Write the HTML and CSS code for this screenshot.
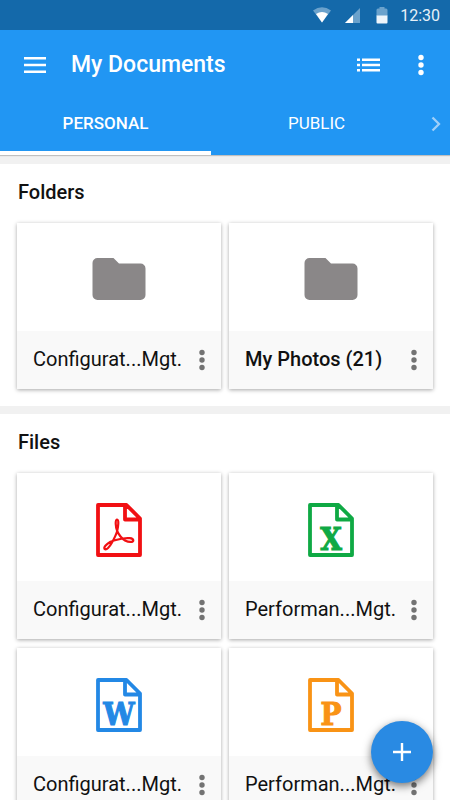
FILE: index.html
```html
<!DOCTYPE html>
<html lang="en">
<head>
    <meta charset="UTF-8">
    <meta name="viewport" content="width=device-width, initial-scale=1.0">
    <title>My Documents</title>
    <link rel="stylesheet" href="styles.css">
</head>
<body>
    <svg width="0" height="0" class="icon-defs" aria-hidden="true">
        <symbol id="more" viewBox="0 0 6 22">
            <circle cx="3" cy="3.5" r="2.7"/>
            <circle cx="3" cy="11" r="2.7"/>
            <circle cx="3" cy="18.5" r="2.7"/>
        </symbol>
        <symbol id="folder" viewBox="0 0 54 44">
            <path d="M5.500 1H21.500l5.500 5.500H48.500a5 5 0 0 1 5 5V38a5 5 0 0 1-5 5H5.500a5 5 0 0 1-5-5V6a5 5 0 0 1 5-5z"/>
        </symbol>
        <symbol id="page" viewBox="0 0 48 56">
            <path d="M3 4H31.500L45 17.500V54H3zM30 4V18.500H45" fill="none" stroke="currentColor" stroke-width="3.800" stroke-linejoin="round"/>
        </symbol>
    </svg>

    <div class="status-bar">
        <svg class="status-wifi" width="18" height="16" viewBox="0 0 18 16" aria-hidden="true">
            <path d="M0 3.500Q9-3 18 3.500L9 15.500z" fill="#6ba2cc"/>
            <path d="M3 7Q9 3 15 7L9 15.500z" fill="#fff"/>
        </svg>
        <svg class="status-signal" width="15" height="15" viewBox="0 0 15 15" aria-hidden="true">
            <path d="M15 0V15H0z" fill="#6ba2cc"/>
            <path d="M8 7V15H0z" fill="#fff"/>
        </svg>
        <svg class="status-battery" width="12" height="17" viewBox="0 0 12 17" aria-hidden="true">
            <path d="M3.500 0h5v1.500H10a1.500 1.500 0 0 1 1.500 1.500V9H.5V3A1.500 1.500 0 0 1 2 1.500h1.500z" fill="#6ba2cc"/>
            <path d="M.5 8.500h11v7a1 1 0 0 1-1 1h-9a1 1 0 0 1-1-1z" fill="#eef5fb"/>
        </svg>
        <span>12:30</span>
    </div>

    <header class="header">
        <div class="toolbar">
            <button class="icon-button" aria-label="Menu">
                <svg width="22" height="16" viewBox="0 0 22 16" fill="#fff">
                    <path d="M0 0h22v2.500H0zM0 6.750h22v2.500H0zM0 13.500h22v2.500H0z"/>
                </svg>
            </button>
            <h1>My Documents</h1>
            <button class="icon-button" aria-label="List view">
                <svg width="23" height="14" viewBox="0 0 23 14" fill="#fff">
                    <path d="M0 .5h3v2.500H0zM5 .5h18v2.500H5zM0 5.750h3v2.500H0zM5 5.750h18v2.500H5zM0 11h3v2.500H0zM5 11h18v2.500H5z"/>
                </svg>
            </button>
            <button class="icon-button toolbar-more" aria-label="More options">
                <svg width="6" height="22"><use href="#more"/></svg>
            </button>
        </div>
        <nav class="tabs">
            <a href="#personal" class="tab active">PERSONAL</a>
            <a href="#public" class="tab">PUBLIC</a>
            <button class="tabs-next" aria-label="Next tab">
                <svg width="10" height="16" viewBox="0 0 10 16" fill="none" stroke="#9fcff9" stroke-width="2.300">
                    <path d="M1.500 1.500L8 8L1.500 14.500"/>
                </svg>
            </button>
        </nav>
    </header>

    <main class="content">
        <section class="group" id="personal">
            <h2>Folders</h2>
            <div class="cards">
                <article class="card">
                    <div class="card-preview"><svg class="folder" width="54" height="44"><use href="#folder"/></svg></div>
                    <div class="card-footer">
                        <span class="card-name">Configurat...Mgt.</span>
                        <button class="card-more" aria-label="Folder options"><svg width="6" height="22"><use href="#more"/></svg></button>
                    </div>
                </article>
                <article class="card">
                    <div class="card-preview"><svg class="folder" width="54" height="44"><use href="#folder"/></svg></div>
                    <div class="card-footer">
                        <span class="card-name unread">My Photos (21)</span>
                        <button class="card-more" aria-label="Folder options"><svg width="6" height="22"><use href="#more"/></svg></button>
                    </div>
                </article>
            </div>
        </section>

        <section class="group">
            <h2>Files</h2>
            <div class="cards">
                <article class="card">
                    <div class="card-preview">
                        <svg class="file pdf" width="48" height="56" viewBox="0 0 48 56">
                            <use href="#page" width="48" height="56"/>
                            <path d="M22.200 30C20.500 25.500 20 19 22 18.500C24.200 18.800 23.200 25 22.200 30C24 34.500 27 37.500 30.500 39.800C34 41.500 38.500 41.300 38.300 39.300C38 36.800 32.500 36.800 28 37.500C23.500 38.200 19 39.200 15.500 40.800C11.500 43 8.500 46 9.500 47.800C11.500 49.500 14.500 46 17 41.500C19.500 37 21.200 33.500 22.200 30z" fill="none" stroke="currentColor" stroke-width="2.200" stroke-linejoin="round"/>
                        </svg>
                    </div>
                    <div class="card-footer">
                        <span class="card-name">Configurat...Mgt.</span>
                        <button class="card-more" aria-label="File options"><svg width="6" height="22"><use href="#more"/></svg></button>
                    </div>
                </article>
                <article class="card">
                    <div class="card-preview">
                        <svg class="file excel" width="48" height="56" viewBox="0 0 48 56">
                            <use href="#page" width="48" height="56"/>
                            <text x="24" y="49">X</text>
                        </svg>
                    </div>
                    <div class="card-footer">
                        <span class="card-name">Performan...Mgt.</span>
                        <button class="card-more" aria-label="File options"><svg width="6" height="22"><use href="#more"/></svg></button>
                    </div>
                </article>
                <article class="card">
                    <div class="card-preview">
                        <svg class="file word" width="48" height="56" viewBox="0 0 48 56">
                            <use href="#page" width="48" height="56"/>
                            <text x="24" y="49">W</text>
                        </svg>
                    </div>
                    <div class="card-footer">
                        <span class="card-name">Configurat...Mgt.</span>
                        <button class="card-more" aria-label="File options"><svg width="6" height="22"><use href="#more"/></svg></button>
                    </div>
                </article>
                <article class="card">
                    <div class="card-preview">
                        <svg class="file powerpoint" width="48" height="56" viewBox="0 0 48 56">
                            <use href="#page" width="48" height="56"/>
                            <text x="24" y="49">P</text>
                        </svg>
                    </div>
                    <div class="card-footer">
                        <span class="card-name">Performan...Mgt.</span>
                        <button class="card-more" aria-label="File options"><svg width="6" height="22"><use href="#more"/></svg></button>
                    </div>
                </article>
            </div>
        </section>
    </main>

    <button class="fab" aria-label="Add document">
        <svg width="18" height="18" viewBox="0 0 18 18" fill="#fff">
            <path d="M7.800 0h2.400v7.800H18v2.400h-7.800V18H7.800v-7.800H0V7.800h7.800z"/>
        </svg>
    </button>
</body>
</html>
```
FILE: styles.css
```css
* {
    box-sizing: border-box;
}

body {
    display: flex;
    flex-direction: column;
    height: 100vh;
    margin: 0;
    font-family: Roboto, sans-serif;
    color: #111;
    background-color: #f1f1f1;
}

h1,
h2 {
    margin: 0;
    font-weight: 500;
}

button {
    display: flex;
    align-items: center;
    justify-content: center;
    padding: 0;
    border: none;
    background: none;
    cursor: pointer;
}

.icon-defs {
    position: absolute;
}

/* System status bar */
.status-bar {
    display: flex;
    flex: none;
    align-items: center;
    justify-content: flex-end;
    height: 30px;
    padding: 0 10px;
    font-size: 16px;
    color: #e6f0f8;
    background-color: #1469aa;
}

.status-signal {
    margin-left: 14px;
}

.status-battery {
    margin: 0 12px 0 16px;
}

/* Blue header with toolbar and tabs */
.header {
    flex: none;
    color: #fff;
    background-color: #2196f3;
    box-shadow: 0 1px 1px rgba(0, 0, 0, 0.2);
    z-index: 1;
}

.toolbar {
    display: flex;
    align-items: center;
    height: 70px;
    padding: 0 12px;
}

.toolbar h1 {
    flex: 1;
    margin-left: 13px;
    font-size: 23px;
    line-height: 32px;
}

.icon-button {
    width: 46px;
    height: 46px;
}

.toolbar-more {
    width: 34px;
    margin-left: 13px;
    fill: #fff;
}

.tabs {
    display: flex;
    height: 55px;
}

.tab {
    flex: 1;
    padding-top: 12px;
    font-size: 17px;
    line-height: 22px;
    text-align: center;
    color: #fff;
    text-decoration: none;
    border-bottom: 4px solid transparent;
}

.tab.active {
    font-weight: 500;
    border-bottom-color: #fff;
}

.tabs-next {
    width: 28px;
    height: 48px;
}

/* Scrolling list of folders and files */
.content {
    flex: 1;
    overflow-y: auto;
    scrollbar-width: none;
}

.group {
    margin-top: 9px;
    padding: 0 17px 17px;
    background-color: #fff;
}

.group + .group {
    margin-top: 8px;
}

.group h2 {
    padding: 16px 1px 19px;
    font-size: 20px;
    line-height: 24px;
}

.cards {
    display: grid;
    grid-template-columns: 1fr 1fr;
    gap: 9px 8px;
}

.card {
    background-color: #fff;
    box-shadow: 0 1px 4px rgba(0, 0, 0, 0.35);
}

.card-preview {
    display: flex;
    align-items: center;
    justify-content: center;
    height: 108px;
    padding-top: 4px;
}

.card-footer {
    display: flex;
    align-items: center;
    justify-content: space-between;
    height: 58px;
    padding: 0 8px 0 16px;
    background-color: #f9f9f9;
}

.card-name {
    padding-bottom: 2px;
    font-size: 20px;
    line-height: 24px;
    white-space: nowrap;
}

.card-name.unread {
    font-weight: 500;
}

.card-more {
    width: 22px;
    height: 40px;
    fill: #737373;
}

.folder {
    fill: #8a8788;
}

.file text {
    font-family: "DejaVu Serif Condensed", "DejaVu Serif", serif;
    font-size: 31px;
    font-weight: bold;
    text-anchor: middle;
    fill: currentColor;
    stroke: currentColor;
    stroke-width: 1px;
}

.pdf {
    color: #f11013;
}

.excel {
    color: #0fa944;
}

.word {
    color: #2388e5;
}

.powerpoint {
    color: #f99315;
}

/* Floating add button */
.fab {
    position: fixed;
    right: 17px;
    bottom: 17px;
    width: 62px;
    height: 62px;
    border-radius: 50%;
    background-color: #298ae3;
    box-shadow: 0 3px 8px rgba(0, 0, 0, 0.55);
    z-index: 2;
}
```
